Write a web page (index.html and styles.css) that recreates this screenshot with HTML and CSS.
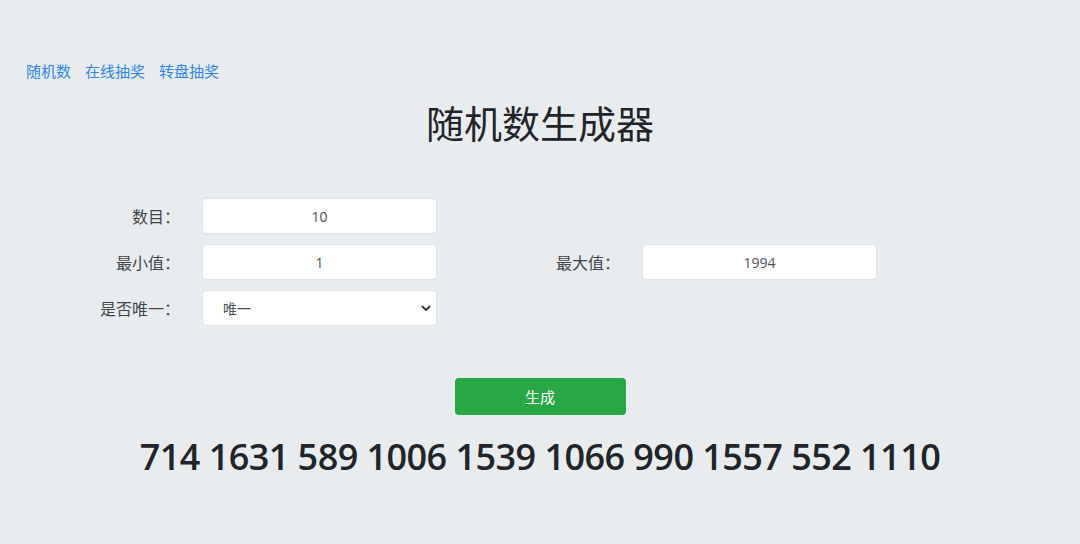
FILE: index.html
```html
<!DOCTYPE html>
<html lang="zh-CN">
<head>
<meta charset="utf-8">
<title>随机数生成器</title>
<link rel="stylesheet" href="styles.css">
</head>
<body>
<div class="page">
  <nav class="nav">
    <a href="#">随机数</a>
    <a href="#">在线抽奖</a>
    <a href="#">转盘抽奖</a>
  </nav>
  <h1 class="title">随机数生成器</h1>
  <form class="form">
    <label class="label">数目<span class="colon">：</span></label>
    <input class="field" type="text" value="10">
    <span></span><span></span>
    <label class="label">最小值<span class="colon">：</span></label>
    <input class="field" type="text" value="1">
    <label class="label">最大值<span class="colon">：</span></label>
    <input class="field" type="text" value="1994">
    <label class="label">是否唯一<span class="colon">：</span></label>
    <div class="select-wrap">
      <select class="field select">
        <option>唯一</option>
        <option>不唯一</option>
      </select>
      <svg class="chev" width="10" height="8" viewBox="0 0 10 8"><path d="M1.5 2.5 L5 6 L8.5 2.5" fill="none" stroke="#343a40" stroke-width="1.8" stroke-linecap="round" stroke-linejoin="round"/></svg>
    </div>
    <span></span><span></span>
  </form>
  <div class="actions">
    <button class="btn" type="button">生成</button>
  </div>
  <div class="result">714 1631 589 1006 1539 1066 990 1557 552 1110</div>
</div>
</body>
</html>
```
FILE: styles.css
```css
* { box-sizing: border-box; }
html, body { margin: 0; padding: 0; }
body {
  background: #e9ecef;
  font-family: "Open Sans", "Noto Sans", "Noto Sans CJK SC", sans-serif;
  color: #212529;
  width: 1080px;
  height: 544px;
  overflow: hidden;
}
.page { padding: 60px 0 0 0; }
.nav {
  display: flex;
  gap: 14px;
  padding-left: 26px;
  font-size: 15px;
  line-height: 21px;
}
.nav a { color: #2b86f7; text-decoration: none; font-family: "Noto Sans CJK SC", sans-serif; }
.title {
  margin: 18px 0 0 0;
  text-align: center;
  font-family: "Noto Sans CJK SC", sans-serif;
  font-weight: 400;
  font-size: 38px;
  line-height: 46px;
  color: #212529;
}
.form {
  margin-top: 53px;
  display: grid;
  grid-template-columns: 180px 235px 161px 235px;
  column-gap: 22px;
  row-gap: 10px;
  align-items: center;
}
.label {
  text-align: right;
  font-size: 16px;
  color: #41464b;
  font-family: "Noto Sans CJK SC", sans-serif;
}
.colon { font-family: "Noto Sans CJK JP", sans-serif; }
.field {
  width: 235px;
  height: 36px;
  border: 1px solid #dde1e5;
  border-radius: 4px;
  background: #fff;
  font-family: "Open Sans", "Noto Sans CJK SC", sans-serif;
  font-size: 14px;
  color: #495057;
  text-align: center;
  outline: none;
  padding: 0 12px;
  display: block;
}
.select-wrap { position: relative; width: 235px; }
.select {
  appearance: none;
  -webkit-appearance: none;
  text-align: left;
  padding-left: 20px;
  font-family: "Noto Sans CJK SC", sans-serif;
  color: #495057;
}
.chev { position: absolute; right: 6px; top: 14px; pointer-events: none; }
.actions {
  margin-top: 52px;
  display: flex;
  justify-content: center;
}
.btn {
  width: 171px;
  height: 37px;
  border: none;
  border-radius: 4px;
  background: #28a745;
  color: #fff;
  font-size: 15px;
  font-family: "Noto Sans CJK SC", sans-serif;
  padding: 0;
}
.result {
  margin-top: 20px;
  text-align: center;
  font-size: 36px;
  font-weight: 600;
  letter-spacing: -0.55px;
  line-height: 44px;
  color: #212529;
}
```
